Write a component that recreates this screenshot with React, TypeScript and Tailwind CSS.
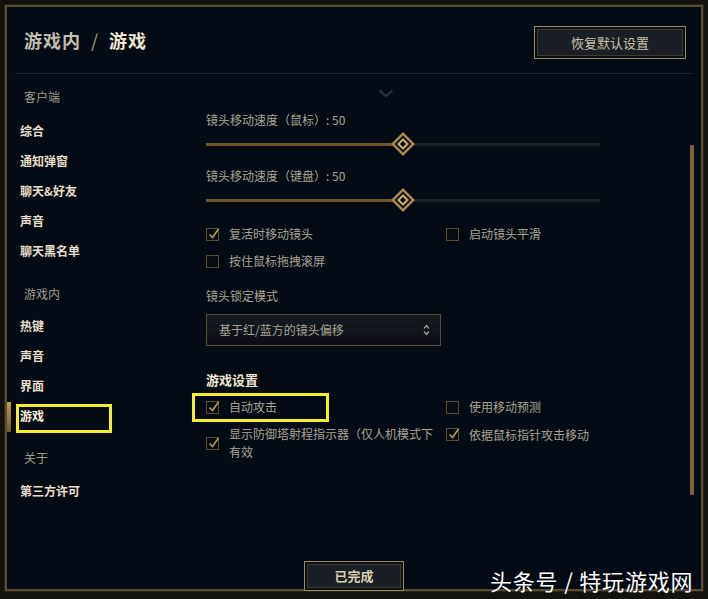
const cjk = { fontFamily: '"Noto Sans CJK SC", "Noto Sans", sans-serif' }

type NavItem = { label: string; heading?: boolean; active?: boolean }

const navItems: NavItem[] = [
  { label: "客户端", heading: true },
  { label: "综合" },
  { label: "通知弹窗" },
  { label: "聊天&好友" },
  { label: "声音" },
  { label: "聊天黑名单" },
  { label: "游戏内", heading: true },
  { label: "热键" },
  { label: "声音" },
  { label: "界面" },
  { label: "游戏", active: true },
  { label: "关于", heading: true },
  { label: "第三方许可" },
]

function Checkbox({ checked }: { checked?: boolean }) {
  return (
    <div className="relative w-[13px] h-[13px] shrink-0 border border-[#5e4c2c] bg-[#070c12]">
      {checked && (
        <svg className="absolute -top-[2px] left-[1px]" width="12" height="13" viewBox="0 0 12 13">
          <path d="M1.5 7.5 L4.5 10.5 L10.5 2" fill="none" stroke="#b09a62" strokeWidth="1.6" />
        </svg>
      )}
    </div>
  )
}

function Check({ label, checked }: { label: string; checked?: boolean }) {
  return (
    <div className="flex items-center gap-[10px] h-[16px]">
      <Checkbox checked={checked} />
      <span className="text-[12px] text-[#a8a394] leading-none">{label}</span>
    </div>
  )
}

function Thumb() {
  return (
    <svg width="26" height="26" viewBox="0 0 26 26">
      <polygon points="13,1 25,13 13,25 1,13" fill="#a88a50" />
      <polygon points="13,4.5 21.5,13 13,21.5 4.5,13" fill="#0a0e13" />
      <polygon points="13,7 19,13 13,19 7,13" fill="#c8aa6e" />
      <polygon points="13,10 16,13 13,16 10,13" fill="#0a0e13" />
    </svg>
  )
}

function Slider({ label, first }: { label: string; first?: boolean }) {
  return (
    <div>
      <div className={`${first ? "mt-[13px]" : "mt-[12px]"} h-[16px] flex items-center text-[12px] text-[#a8a394] leading-none`}>{label}</div>
      <div className="mt-[4px] relative w-[394px] h-[24px] flex items-center">
        <div className="h-[3px] w-1/2 bg-[#6e5428]" />
        <div className="h-[3px] w-1/2 bg-[#1b2027]" />
        <div className="absolute left-1/2 top-1/2 -translate-x-1/2 -translate-y-1/2">
          <Thumb />
        </div>
      </div>
    </div>
  )
}

export default function App() {
  return (
    <div className="relative w-[708px] h-[599px] bg-[#14120e] pt-[5px] pl-[5px] overflow-hidden" style={cjk}>
      {/* Panel */}
      <div className="w-[698px] h-[586px] border-2 border-[#5a4d36] bg-[#050b14] flex flex-col shadow-[0_0_0_1px_#2a241a]">
        {/* Header */}
        <div className="h-[66px] flex items-center justify-between pl-[17px] pr-[15px]">
          <h1 className="text-[18px] font-bold tracking-[1px]">
            <span className="text-[#c4bfae]">游戏内</span>
            <span className="text-[#a09b8c] mx-[10px] font-normal">/</span>
            <span className="text-[#f0e6d2]">游戏</span>
          </h1>
          <button className="mt-[5px] w-[152px] h-[33px] border border-[#9a8a66] bg-[#1a1f26] shadow-[inset_0_0_0_2px_#0c1117,inset_0_0_0_3px_#3e3a30] text-[13px] text-[#c9c0a6]">
            恢复默认设置
          </button>
        </div>
        <div className="mx-[8px] h-px bg-[#1d2430]" />

        {/* Body */}
        <div className="flex-1 flex min-h-0">
          {/* Sidebar */}
          <nav className="w-[199px] pt-[8px]">
            {navItems.map((item, i) =>
              item.heading ? (
                <div
                  key={i}
                  className={`h-[30px] flex items-center pl-[17px] text-[12px] text-[#a09b8c] ${i === 0 ? "mb-[4px]" : i === 11 ? "mt-[12px] mb-[3px]" : "mt-[13px] mb-[2px]"}`}
                >
                  {item.label}
                </div>
              ) : (
                <div key={i} className="relative h-[30px] flex items-center pl-[13px]">
                  {item.active && <div className="absolute left-0 top-[1px] w-[4px] h-[30px] bg-gradient-to-b from-[#c89b3c] to-[#785a28]" />}
                  <span className={`text-[12px] font-bold ${item.active ? "text-[#f8f0dc]" : "text-[#e8dfc8]"}`}>{item.label}</span>
                  {item.active && (
                    <div className="absolute left-[9px] top-[3px] w-[96px] h-[29px] border-[3px] border-[#f4ee2c]" />
                  )}
                </div>
              )
            )}
          </nav>

          {/* Content */}
          <div className="flex-1 min-w-0">
            <div className="mt-[15px] h-[10px] pl-[172px]">
              <svg width="16" height="9" viewBox="0 0 16 9">
                <path d="M1.5 1.5 L8 7 L14.5 1.5" fill="none" stroke="#2a3340" strokeWidth="2.2" />
              </svg>
            </div>

            <Slider label="镜头移动速度（鼠标）: 50" first />
            <Slider label="镜头移动速度（键盘）: 50" />

            <div className="mt-[14px] grid grid-cols-[240px_1fr] gap-y-[11px]">
              <Check label="复活时移动镜头" checked />
              <Check label="启动镜头平滑" />
              <Check label="按住鼠标拖拽滚屏" />
            </div>

            <div className="mt-[19px] h-[16px] flex items-center text-[12px] text-[#a8a394]">镜头锁定模式</div>
            <div className="mt-[10px] w-[235px] h-[32px] border border-[#5a4d36] bg-gradient-to-b from-[#161b22] to-[#0b1016] flex items-center justify-between pl-[12px] pr-[10px]">
              <span className="text-[12px] text-[#a8a394]">基于红/蓝方的镜头偏移</span>
              <svg width="7" height="12" viewBox="0 0 7 12">
                <path d="M1 4.5 L3.5 1.5 L6 4.5 M1 7.5 L3.5 10.5 L6 7.5" fill="none" stroke="#a8a394" strokeWidth="1.2" />
              </svg>
            </div>

            <div className="mt-[25px] h-[18px] flex items-center text-[13px] font-bold text-[#f0e6d2]">游戏设置</div>

            <div className="mt-[10px] grid grid-cols-[240px_1fr] gap-y-[10px]">
              <div className="relative">
                <Check label="自动攻击" checked />
                <div className="absolute -left-[14px] -top-[6px] w-[137px] h-[29px] border-[3px] border-[#f4ee2c]" />
              </div>
              <Check label="使用移动预测" />
              <div className="flex items-center gap-[10px] pr-[4px]">
                <Checkbox checked />
                <span className="text-[12px] leading-[18px] text-[#a8a394]">显示防御塔射程指示器（仅人机模式下有效</span>
              </div>
              <div className="flex items-start gap-[10px] pt-[3px]">
                <Checkbox checked />
                <span className="text-[12px] leading-[13px] text-[#a8a394]">依据鼠标指针攻击移动</span>
              </div>
            </div>
          </div>

          {/* Scrollbar */}
          <div className="w-[4px] mt-[71px] h-[350px] bg-[#7e6136] rounded-[1px]" />
          <div className="w-[7px]" />
        </div>

        {/* Footer */}
        <div className="h-[30px] flex justify-center pt-[2px]">
          <button className="w-[100px] h-[30px] border border-[#9a8a66] bg-[#1a1f26] shadow-[inset_0_0_0_2px_#0c1117,inset_0_0_0_3px_#3e3a30] text-[13px] font-bold text-[#d8ceb0]">
            已完成
          </button>
        </div>
      </div>

      {/* Watermark */}
      <div className="absolute left-[490px] top-[564px] text-[22px] text-white tracking-[0.8px] [text-shadow:0_0_2px_rgba(0,0,0,0.6)]">
        头条号 / 特玩游戏网
      </div>
    </div>
  )
}
